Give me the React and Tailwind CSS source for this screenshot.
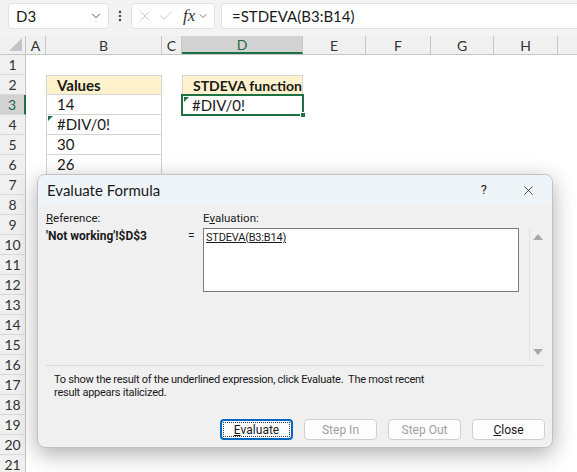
import React from 'react';
import { ChevronDown, X, Check, EllipsisVertical } from 'lucide-react';

const cols = [
  { key: 'A', w: 'w-[20px]' },
  { key: 'B', w: 'w-[116px]' },
  { key: 'C', w: 'w-[20px]' },
  { key: 'D', w: 'w-[121px]' },
  { key: 'E', w: 'w-[63px]' },
  { key: 'F', w: 'w-[65px]' },
  { key: 'G', w: 'w-[63px]' },
  { key: 'H', w: 'w-[64px]' },
  { key: '', w: 'w-[64px]' },
];

const values = { 3: '14', 4: '#DIV/0!', 5: '30', 6: '26', 7: '', 8: '', 9: '', 10: '', 11: '', 12: '', 13: '', 14: '' };

const rows = Array.from({ length: 21 }, (_, i) => i + 1);

const cellFont = { fontFamily: 'Lato, "Liberation Sans", sans-serif' };

function Triangle() {
  return <span className="absolute left-[1px] top-[1px] w-0 h-0 border-t-[5px] border-r-[5px] border-t-[#1e7145] border-r-transparent" />;
}

function Cell({ row, col }) {
  const base = `${col.w} shrink-0 h-full relative flex items-center whitespace-nowrap text-[15px] text-[#1a1a1a]`;
  if (col.key === 'B' && row >= 2 && row <= 14) {
    const header = row === 2;
    return (
      <div className={`${base} pl-[10px] border-l border-r border-b border-[#d4d4d4] ${header ? 'bg-[#fff2cc] font-bold border-t' : 'bg-white'}`}>
        {row === 4 && <Triangle />}
        {header ? 'Values' : values[row]}
      </div>
    );
  }
  if (col.key === 'D' && row === 2) {
    return (
      <div className={`${base} pl-[10px] bg-[#fff2cc] border border-[#d4d4d4]`}>
        <span className="font-bold text-[14px]">STDEVA function</span>
      </div>
    );
  }
  if (col.key === 'D' && row === 3) {
    return (
      <div className={`${base} pl-[10px]`}>
        <div className="absolute -left-[1px] -top-[1px] -right-[1px] -bottom-[1px] border-2 border-[#1e7145]" />
        <span className="absolute -right-[3px] -bottom-[3px] w-[6px] h-[6px] bg-[#1e7145] border border-white" />
        <span className="absolute left-[2px] top-[2px] w-0 h-0 border-t-[5px] border-r-[5px] border-t-[#1e7145] border-r-transparent" />
        #DIV/0!
      </div>
    );
  }
  return <div className={base} />;
}

function Button({ children, disabled, focused }) {
  return (
    <div
      className={`relative h-[21px] w-[73px] rounded-[4px] flex items-center justify-center text-[12px] ${
        focused ? 'border-2 border-[#0067c0] bg-[#fdfdfd]' : 'border border-[#d0d0d0] bg-[#fdfdfd]'
      } ${disabled ? 'text-[#a0a0a0]' : 'text-[#1a1a1a]'}`}
    >
      {focused && <span className="absolute inset-[1px] border border-dotted border-[#333]" />}
      {children}
    </div>
  );
}

function Dialog() {
  return (
    <div
      className="absolute left-[37px] top-[174px] w-[516px] h-[274px] rounded-[8px] border border-[#c2c2c2] bg-[#f0f0f0] overflow-hidden shadow-[0_6px_22px_rgba(0,0,0,0.32)] flex flex-col"
      style={{ fontFamily: 'Roboto, "Liberation Sans", sans-serif' }}
    >
      <div className="h-[30px] shrink-0 bg-[#eef4f7] flex items-center pl-[9px]">
        <span className="text-[15px] text-[#1a1a1a]" style={{ fontFamily: 'Lato, sans-serif' }}>Evaluate Formula</span>
        <span className="ml-auto mr-[34px] text-[13px] text-[#1a1a1a]">?</span>
        <X size={15} strokeWidth={1.2} className="mr-[16px] text-[#1a1a1a]" />
      </div>
      <div className="flex-1 flex flex-col pl-[8px] pr-[7px]">
        <div className="flex">
          <div className="w-[141px] pt-[6px] text-[11.5px] leading-[15px] text-[#1a1a1a]">
            <div><span className="underline">R</span>eference:</div>
            <div className="mt-[3px] text-[12px] font-bold whitespace-nowrap">'Not working'!$D$3</div>
          </div>
          <div className="w-[16px] pt-[24px] pl-[1px] text-[12px] leading-[15px] text-[#1a1a1a]">=</div>
          <div className="pt-[6px]">
            <div className="text-[11.5px] leading-[15px] text-[#1a1a1a]">E<span className="underline">v</span>aluation:</div>
            <div className="mt-[2px] w-[316px] h-[64px] border border-[#7a7a7a] bg-white pl-[2px] pt-[1px] text-[11px] tracking-[-0.2px] leading-[15px] text-[#1a1a1a]">
              <span className="underline">STDEVA(B3:B14)</span>
            </div>
          </div>
          <div className="ml-[10px] mt-[23px] w-[16px] h-[133px] border-l border-[#e2e2e2] flex flex-col items-center justify-between py-[6px]">
            <span className="w-0 h-0 border-l-[5px] border-r-[5px] border-b-[6px] border-l-transparent border-r-transparent border-b-[#a8a8a8]" />
            <span className="w-0 h-0 border-l-[5px] border-r-[5px] border-t-[6px] border-l-transparent border-r-transparent border-t-[#a8a8a8]" />
          </div>
        </div>
        <div className="mt-[4px] border-t border-[#d8d8d8]" />
        <div className="mt-[7px] pl-[8px] text-[11px] tracking-[-0.25px] leading-[13px] text-[#1a1a1a]">
          <div>To show the result of the underlined expression, click Evaluate.&nbsp; The most recent</div>
          <div>result appears italicized.</div>
        </div>
        <div className="mt-[20px] flex justify-end gap-[11px]">
          <Button focused>
            <span className="underline">E</span>valuate
          </Button>
          <Button disabled>Step In</Button>
          <Button disabled>Step Out</Button>
          <Button>
            <span className="underline">C</span>lose
          </Button>
        </div>
      </div>
    </div>
  );
}

export default function App() {
  return (
    <div className="relative w-[577px] h-[472px] overflow-hidden bg-white" style={cellFont}>
      {/* formula bar */}
      <div className="h-[36px] bg-[#f3f3f3] flex items-start pt-[3px]">
        <div className="ml-[8px] w-[101px] h-[26px] bg-white border border-[#e1e1e1] rounded-[4px] flex items-center pl-[7px] pr-[5px] text-[15px] text-[#1a1a1a]">
          D3
          <ChevronDown size={14} strokeWidth={1.5} className="ml-auto text-[#444]" />
        </div>
        <div className="w-[22px] h-[26px] flex items-center justify-center">
          <EllipsisVertical size={14} strokeWidth={2.5} className="text-[#555]" />
        </div>
        <div className="w-[84px] h-[26px] bg-white border border-[#e1e1e1] rounded-[4px] flex items-center pl-[5px]">
          <X size={16} strokeWidth={1.2} className="text-[#bdbdbd]" />
          <Check size={16} strokeWidth={1.2} className="ml-[5px] text-[#bdbdbd]" />
          <span className="ml-[9px] text-[17px] italic text-[#333]" style={{ fontFamily: '"Liberation Serif", serif' }}>fx</span>
          <ChevronDown size={12} strokeWidth={1.5} className="ml-[2px] text-[#555]" />
        </div>
        <div className="ml-[6px] flex-1 h-[26px] bg-white border border-r-0 border-[#e1e1e1] rounded-l-[4px] flex items-center pl-[10px] text-[15px] text-[#1a1a1a]">
          =STDEVA(B3:B14)
        </div>
      </div>

      {/* column headers */}
      <div className="flex h-[19px] bg-[#f0f0f0] border-b border-[#c6c6c6]">
        <div className="w-[26px] shrink-0 h-full relative border-r border-[#c6c6c6]">
          <span className="absolute right-[3px] bottom-[3px] w-0 h-0 border-l-[13px] border-b-[13px] border-l-transparent border-b-[#c4c4c4]" />
        </div>
        {cols.map((c, i) => (
          <div
            key={i}
            className={`${c.w} shrink-0 h-full flex items-center justify-center text-[14px] border-r border-[#c6c6c6] ${
              c.key === 'D' ? 'bg-[#d2d2d2] text-[#1e6b3f] border-b-2 border-b-[#1e7145]' : 'text-[#333]'
            }`}
          >
            {c.key}
          </div>
        ))}
      </div>

      {/* rows */}
      {rows.map((r) => (
        <div key={r} className="flex h-[20px]">
          <div
            className={`w-[26px] shrink-0 h-full flex items-center justify-center text-[14px] border-b border-[#d9d9d9] ${
              r === 3 ? 'bg-[#d2d2d2] text-[#1e6b3f] border-r-2 border-r-[#1e7145]' : 'bg-[#f0f0f0] text-[#333] border-r border-r-[#c6c6c6]'
            }`}
          >
            {r}
          </div>
          {cols.map((c, i) => (
            <Cell key={i} row={r} col={c} />
          ))}
        </div>
      ))}

      <Dialog />
    </div>
  );
}
